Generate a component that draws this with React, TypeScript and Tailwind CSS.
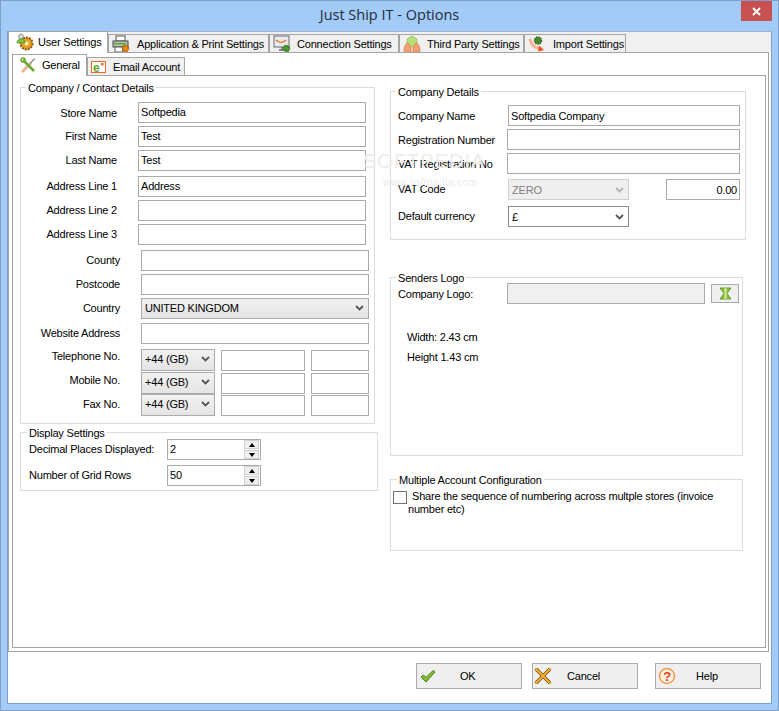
import type { ReactNode } from "react"

const font = "font-['Liberation_Sans',Arial,sans-serif]"

function UserIcon() {
  return (
    <svg width="18" height="18" viewBox="0 0 18 18">
      <circle cx="10.5" cy="10.5" r="6" fill="#e8a020" stroke="#8a5a10" strokeDasharray="2 1" strokeWidth="2" />
      <circle cx="10.5" cy="10.5" r="2" fill="#fff3c8" />
      <circle cx="5" cy="3.5" r="2.5" fill="#d8d8d8" stroke="#777" strokeWidth="0.7" />
      <path d="M1 10c0-3 2-4 4-4s4 1 4 4z" fill="#7cc43a" stroke="#4c8a1c" strokeWidth="0.7" />
    </svg>
  )
}

function PrinterIcon() {
  return (
    <svg width="18" height="18" viewBox="0 0 18 18">
      <rect x="4" y="1" width="9" height="5" fill="#fff" stroke="#555" />
      <rect x="1" y="6" width="15" height="6" fill="#b8c4b8" stroke="#444" />
      <rect x="2" y="8" width="12" height="1.5" fill="#5ca828" />
      <rect x="3" y="12" width="8" height="5" fill="#fff" stroke="#555" />
      <circle cx="13.5" cy="13.5" r="3" fill="#f08a10" stroke="#a85a08" strokeDasharray="1.5 0.8" strokeWidth="1.5" />
    </svg>
  )
}

function MonitorIcon() {
  return (
    <svg width="18" height="18" viewBox="0 0 18 18">
      <rect x="1" y="1" width="15" height="11" fill="#e8ecec" stroke="#667" />
      <path d="M3 5c3 3 7 3 10 0" fill="none" stroke="#f06a20" strokeWidth="1.5" />
      <path d="M6 15h6M9 12v3" stroke="#667" strokeWidth="1.5" />
      <circle cx="13.5" cy="13.5" r="3" fill="#4c9a30" stroke="#2f7a20" strokeDasharray="1.5 0.8" strokeWidth="1.5" />
    </svg>
  )
}

function ThirdPartyIcon() {
  return (
    <svg width="18" height="18" viewBox="0 0 18 18">
      <path d="M9 1l5 3v5l-5 3-5-3V4z" fill="#b6e07a" stroke="#8cb860" strokeWidth="0.7" />
      <path d="M1 16c0-5 2-8 4-8l3 4v5H2zM17 16c0-5-2-8-4-8l-3 4v5h6z" fill="#f4a070" stroke="#d07840" strokeWidth="0.7" />
    </svg>
  )
}

function ImportIcon() {
  return (
    <svg width="18" height="18" viewBox="0 0 18 18">
      <circle cx="10" cy="5.5" r="3.5" fill="#4c8a30" stroke="#2f6a20" strokeDasharray="1.5 0.8" strokeWidth="1.5" />
      <path d="M2 4c1 6 5 9 11 10" fill="none" stroke="#f4b090" strokeWidth="3" />
      <path d="M11 10.5l5 4.500-6 1.500z" fill="#f0501c" />
    </svg>
  )
}

function GeneralIcon() {
  return (
    <svg width="17" height="17" viewBox="0 0 17 17">
      <path d="M2 15L11 6" stroke="#eab48e" strokeWidth="3" />
      <path d="M10 7l3-4 2-1" stroke="#999" strokeWidth="1.5" fill="none" />
      <path d="M3 3l11 11" stroke="#6aa82c" strokeWidth="2.500" />
      <circle cx="3" cy="3" r="2" fill="none" stroke="#6aa82c" strokeWidth="1.5" />
    </svg>
  )
}

function EmailIcon() {
  return (
    <svg width="15" height="14" viewBox="0 0 15 14">
      <rect x="0.5" y="1.500" width="14" height="11" fill="#fff" stroke="#ee6a24" />
      <rect x="10" y="3" width="2.500" height="2.500" fill="#ee6a24" />
      <text x="2" y="12" fontSize="12" fontWeight="700" fill="#5fa52a" fontFamily="Liberation Sans">e</text>
    </svg>
  )
}

function OkIcon() {
  return (
    <svg width="16" height="14" viewBox="0 0 16 14">
      <path d="M1 8l2.500-2 2.500 2.500L13 1.500l2 1.500-9 10z" fill="#84bd32" stroke="#4f7f18" strokeWidth="1" />
    </svg>
  )
}

function CancelIcon() {
  return (
    <svg width="16" height="16" viewBox="0 0 16 16">
      <path d="M1 1l14 14M15 1L1 15" stroke="#7a4a10" strokeWidth="3.500" strokeLinecap="round" />
      <path d="M1 1l14 14M15 1L1 15" stroke="#f0b030" strokeWidth="2" strokeLinecap="round" />
    </svg>
  )
}

function HelpIcon() {
  return (
    <svg width="18" height="18" viewBox="0 0 18 18">
      <circle cx="9" cy="9" r="7.500" fill="#fff0e0" stroke="#f29a4a" strokeWidth="1.500" />
      <text x="9" y="14" fontSize="13" fontWeight="700" fill="#e0401c" textAnchor="middle" fontFamily="Liberation Sans">?</text>
    </svg>
  )
}

function PickIcon() {
  return (
    <svg width="13" height="13" viewBox="0 0 13 13">
      <path d="M1 1h11L8 6.500l4 5.500H1l4-5.500z" fill="#8fc43a" stroke="#4f8a18" strokeWidth="0.8" />
      <path d="M5.500 1h2v11h-2z" fill="#d5e8a0" />
    </svg>
  )
}

function Chevron({ dim }: { dim?: boolean }) {
  return (
    <svg width="9" height="6" viewBox="0 0 9 6" className="shrink-0">
      <path d="M1 1l3.500 3.500L8 1" fill="none" stroke={dim ? "#b4b4b4" : "#555"} strokeWidth="1.800" />
    </svg>
  )
}

function Tab({ active, width, icon, iconGap, label }: { active?: boolean; width: string; icon: ReactNode; iconGap: string; label: string }) {
  if (active) {
    return (
      <div className={`${width} z-10 -mb-px flex h-[22px] items-center whitespace-nowrap border border-b-0 border-[#a4a4a4] bg-white pb-px pl-[7px] text-black`}>
        {icon}
        <span className={iconGap}>{label}</span>
      </div>
    )
  }
  return (
    <div className={`${width} -mb-px flex h-[19px] items-center whitespace-nowrap border border-[#a4a4a4] bg-[#f0f0f0] pl-[3px] text-black`}>
      {icon}
      <span className={iconGap}>{label}</span>
    </div>
  )
}

function Field({ value, className = "" }: { value?: string; className?: string }) {
  return (
    <input
      readOnly
      value={value ?? ""}
      className={`h-[21px] border border-[#ababab] bg-white px-[2px] tracking-[-0.2px] text-black outline-none ${className}`}
    />
  )
}

function Combo({ value, className = "", plain, disabled }: { value: string; className?: string; plain?: boolean; disabled?: boolean }) {
  const look = disabled
    ? "bg-[#efefef] text-[#808080] border-[#d0d0d0]"
    : plain
      ? "bg-white text-black border-[#8d8d8d]"
      : "bg-gradient-to-b from-[#f2f2f2] to-[#e4e4e4] text-black border-[#ababab]"
  return (
    <div className={`flex items-center justify-between border pl-[3px] pr-[4px] ${look} ${className}`}>
      <span>{value}</span>
      <Chevron dim={disabled} />
    </div>
  )
}

function Group({ title, className, legendClass = "ml-[5px]", children }: { title: string; className: string; legendClass?: string; children: ReactNode }) {
  return (
    <fieldset className={`border border-[#dcdcdc] ${className}`}>
      <legend className={`px-[2px] leading-[14px] text-black ${legendClass}`}>
        <span className="block translate-y-px">{title}</span>
      </legend>
      {children}
    </fieldset>
  )
}

function Row({ label, value, className = "", labelWidth = "w-[96px]", labelClass = "pb-[2px] text-right", inputClass = "ml-[21px] w-[228px] pb-[2px]" }: { label: string; value?: string; className?: string; labelWidth?: string; labelClass?: string; inputClass?: string }) {
  return (
    <div className={`flex items-center ${className}`}>
      <span className={`${labelWidth} ${labelClass}`}>{label}</span>
      <Field value={value} className={inputClass} />
    </div>
  )
}

function Phone({ label, className = "", labelClass = "" }: { label: string; className?: string; labelClass?: string }) {
  return (
    <div className={`flex h-[22px] items-start ${className}`}>
      <span className={`w-[99px] text-right ${labelClass}`}>{label}</span>
      <Combo value="+44 (GB)" className="ml-[21px] h-[22px] w-[74px] pb-[2px]" />
      <Field className="ml-[6px] mt-px w-[84px]" />
      <Field className="ml-[6px] mt-px w-[58px]" />
    </div>
  )
}

function Spinner({ label, value, className = "" }: { label: string; value: string; className?: string }) {
  return (
    <div className={`flex items-center pl-[8px] ${className}`}>
      <span className="w-[138px] pb-[2px]">{label}</span>
      <div className="flex h-[21px] w-[94px] items-stretch border border-[#ababab] bg-white">
        <span className="flex-1 pl-[2px] leading-[19px]">{value}</span>
        <div className="mr-[1px] flex w-[15px] flex-col gap-px">
          <div className="flex flex-1 items-center justify-center border border-[#d0d0d0] bg-[#efefef]">
            <div className="h-0 w-0 border-x-[3px] border-b-[4px] border-x-transparent border-b-black" />
          </div>
          <div className="flex flex-1 items-center justify-center border border-[#d0d0d0] bg-[#efefef]">
            <div className="h-0 w-0 border-x-[3px] border-t-[4px] border-x-transparent border-t-black" />
          </div>
        </div>
      </div>
    </div>
  )
}

function FooterButton({ icon, label, iconClass, textClass }: { icon: ReactNode; label: string; iconClass: string; textClass: string }) {
  return (
    <div className="flex h-[26px] w-[106px] items-center border border-[#ababab] bg-[#efefef] text-black">
      <span className={`flex ${iconClass}`}>{icon}</span>
      <span className={textClass}>{label}</span>
    </div>
  )
}

export default function App() {
  return (
    <div className={`${font} relative flex h-[711px] w-[779px] flex-col overflow-hidden border border-[#7f9fc6] bg-[#a3cbf7] text-[11px] leading-[14px] tracking-[-0.2px] text-black`}>
      <div className="relative flex h-[30px] shrink-0 items-center justify-center pb-[2px] font-['Open_Sans',sans-serif] text-[14.500px] tracking-normal text-[#1f2d3d]">
        Just Ship IT - Options
        <div className="absolute right-[6px] top-0 flex h-[20px] w-[31px] items-center justify-center bg-[#c75050]">
          <svg width="9" height="9" viewBox="0 0 9 9">
            <path d="M1 1l7 7M8 1L1 8" stroke="#fff" strokeWidth="1.800" />
          </svg>
        </div>
      </div>

      <div className="mx-[6px] mb-[6px] flex flex-1 flex-col border border-t-0 border-[#7f9fc6] bg-white">
        <div className="flex h-[21px] shrink-0 items-end border-t border-[#9fb2c8] bg-[#f0f0f0]">
          <Tab active width="w-[100px]" iconGap="ml-[4px]" icon={<UserIcon />} label="User Settings" />
          <Tab width="w-[161px]" iconGap="ml-[7px]" icon={<PrinterIcon />} label="Application & Print Settings" />
          <Tab width="w-[130px]" iconGap="ml-[6px]" icon={<MonitorIcon />} label="Connection Settings" />
          <Tab width="w-[125px]" iconGap="ml-[6px]" icon={<ThirdPartyIcon />} label="Third Party Settings" />
          <Tab width="w-[102px]" iconGap="ml-[7px]" icon={<ImportIcon />} label="Import Settings" />
        </div>

        <div className="flex h-[600px] w-[761px] shrink-0 flex-col border border-[#a4a4a4] bg-white pb-[3px] pl-[3px] pr-[2px] pt-[1px]">
          <div className="flex h-[21px] shrink-0 items-end">
            <Tab active width="w-[75px]" iconGap="ml-[5px]" icon={<GeneralIcon />} label="General" />
            <Tab width="w-[98px]" iconGap="ml-[7px]" icon={<EmailIcon />} label="Email Account" />
          </div>

          <div className="relative flex flex-1 gap-[12px] border border-[#a4a4a4] bg-white pl-[7px] pt-[4px]">
            <div className="flex w-[358px] flex-col">
              <Group title="Company / Contact Details" className="w-[355px] pb-[7px]">
                <Row label="Store Name" value="Softpedia" className="mt-[8px]" labelClass="pt-px text-right" />
                <Row label="First Name" value="Test" className="mt-[3px]" />
                <Row label="Last Name" value="Test" className="mt-[3px]" />
                <Row label="Address Line 1" value="Address" className="mt-[5px]" />
                <Row label="Address Line 2" className="mt-[3px]" />
                <Row label="Address Line 3" className="mt-[3px]" />
                <Row label="County" className="mt-[5px]" labelWidth="w-[99px]" />
                <Row label="Postcode" className="mt-[3px]" labelWidth="w-[99px]" />
                <div className="mt-[3px] flex items-center">
                  <span className="w-[99px] pb-[2px] text-right">Country</span>
                  <Combo value="UNITED KINGDOM" className="ml-[21px] h-[21px] w-[228px] pb-[2px]" />
                </div>
                <Row label="Website Address" className="mt-[4px]" labelWidth="w-[99px]" />
                <Phone label="Telephone No." className="mt-[5px]" />
                <Phone label="Mobile No." className="mt-px" labelClass="pt-px" />
                <Phone label="Fax No." labelClass="pt-[3px]" />
              </Group>

              <Group title="Display Settings" className="mt-px w-[358px] pb-[4px]" legendClass="ml-[6px]">
                <Spinner label="Decimal Places Displayed:" value="2" />
                <Spinner label="Number of Grid Rows" value="50" className="mt-[5px]" />
              </Group>
            </div>

            <div className="mt-[4px] flex w-[357px] flex-col">
              <Group title="Company Details" className="w-[356px] pb-[12px]">
                <Row label="Company Name" value="Softpedia Company" className="mt-[7px] pl-[7px]" labelWidth="w-[110px]" labelClass="text-left" inputClass="w-[232px]" />
                <Row label="Registration Number" className="mt-[3px] pl-[7px]" labelWidth="w-[109px]" labelClass="text-left" inputClass="w-[233px]" />
                <Row label="VAT Registration No" className="mt-[3px] pl-[7px]" labelWidth="w-[109px]" labelClass="text-left" inputClass="w-[233px]" />
                <div className="mt-[5px] flex items-center pl-[7px]">
                  <span className="w-[110px] pb-px">VAT Code</span>
                  <Combo disabled value="ZERO" className="h-[21px] w-[121px]" />
                  <input readOnly value="0.00" className="ml-[37px] h-[21px] w-[74px] border border-[#ababab] px-[2px] text-right tracking-[-0.2px] outline-none" />
                </div>
                <div className="mt-[6px] flex items-center pl-[7px]">
                  <span className="w-[110px] pb-px">Default currency</span>
                  <Combo plain value="£" className="h-[21px] w-[121px]" />
                </div>
              </Group>

              <Group title="Senders Logo" className="mt-[30px] w-[353px] pb-[91px]">
                <div className="-mt-px flex items-center pl-[7px]">
                  <span className="w-[109px]">Company Logo:</span>
                  <Field className="w-[198px] !bg-[#f0f0f0]" />
                  <div className="ml-[6px] flex h-[19px] w-[28px] items-center justify-center border border-[#ababab] bg-[#efefef]">
                    <PickIcon />
                  </div>
                </div>
                <p className="mt-[26px] pl-[16px]">Width: 2.43 cm</p>
                <p className="mt-[6px] pl-[16px]">Height 1.43 cm</p>
              </Group>

              <Group title="Multiple Account Configuration" className="mt-[16px] w-[353px] pb-[34px]" legendClass="ml-[6px]">
                <div className="mt-[4px] flex items-start pl-[2px]">
                  <div className="mt-px h-[13px] w-[14px] shrink-0 border border-[#707070] bg-white" />
                  <p className="ml-[1px] w-[320px] indent-[4px] leading-[13px]">
                    Share the sequence of numbering across multple stores (invoice number etc)
                  </p>
                </div>
              </Group>
            </div>

            <div className="pointer-events-none absolute left-[350px] top-[74px] select-none text-[#ececec]">
              <div className="text-[20px] leading-[22px] tracking-[1px]">SOFTPEDIA</div>
              <div className="ml-[20px] mt-[5px] text-[10px] leading-[12px] tracking-[0.5px]">www.softpedia.com</div>
            </div>
          </div>
        </div>

        <div className="flex flex-1 justify-end pr-[10px] pt-[11px]">
          <FooterButton icon={<OkIcon />} label="OK" iconClass="ml-[3px]" textClass="ml-[24px]" />
          <div className="w-[10px]" />
          <FooterButton icon={<CancelIcon />} label="Cancel" iconClass="ml-[2px]" textClass="ml-[16px]" />
          <div className="w-[17px]" />
          <FooterButton icon={<HelpIcon />} label="Help" iconClass="ml-[2px]" textClass="ml-[20px]" />
        </div>
      </div>
    </div>
  )
}
